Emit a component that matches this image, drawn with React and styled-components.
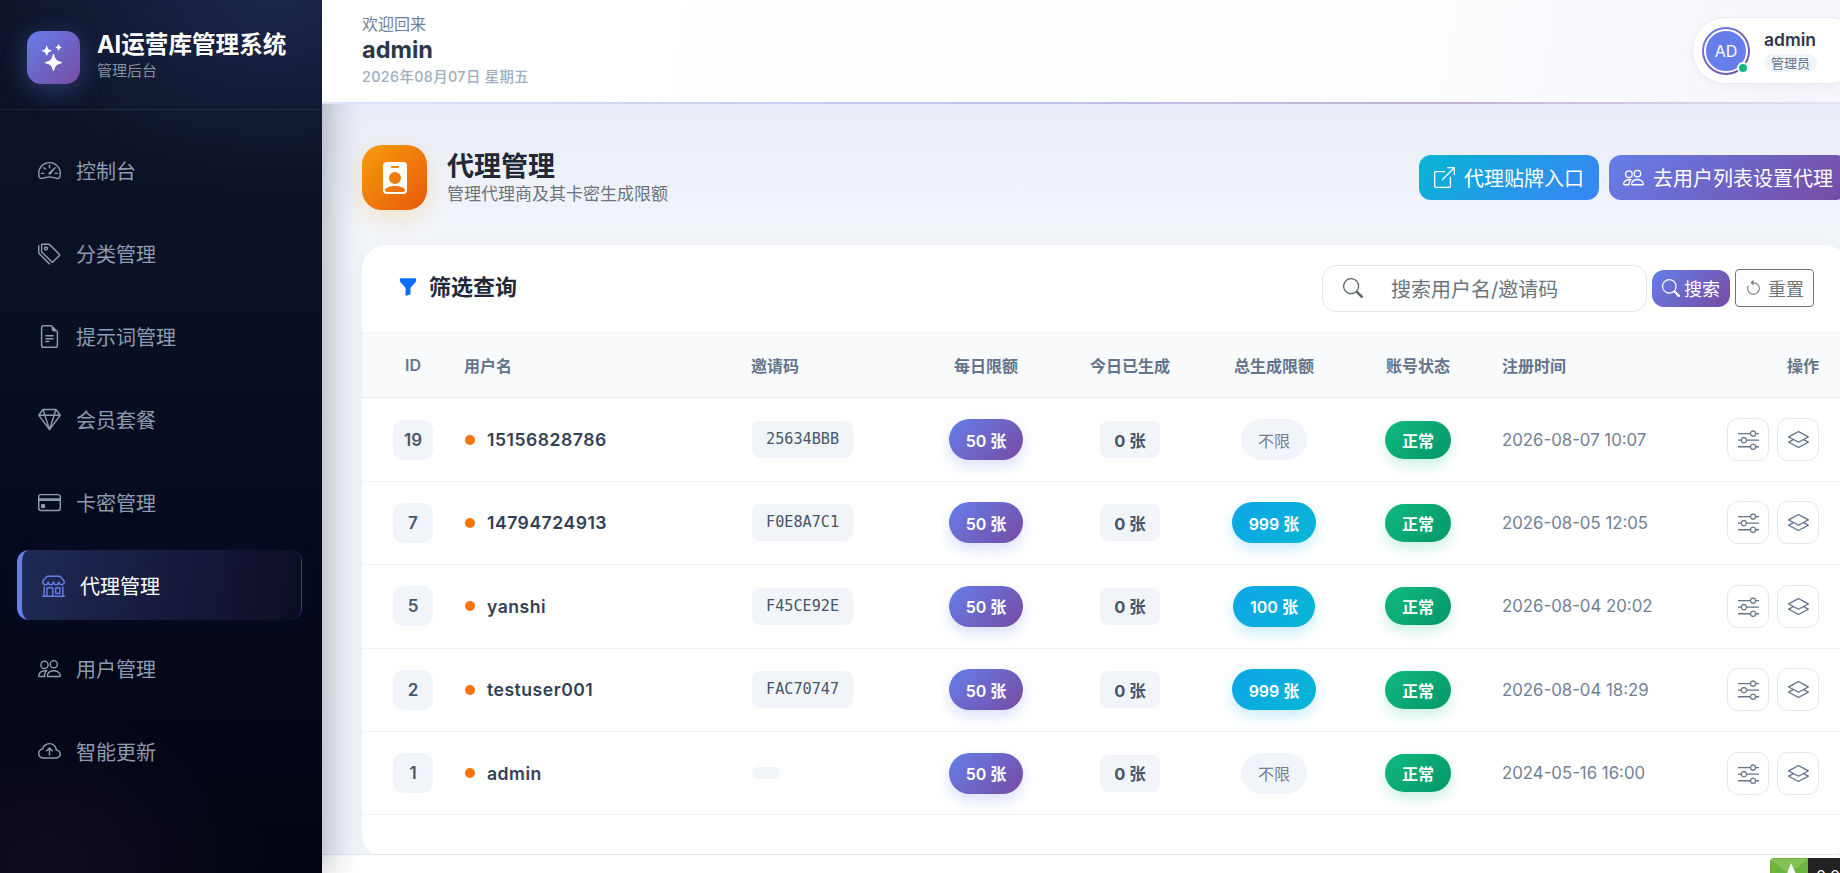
import React from "react"
import styled, { createGlobalStyle } from "styled-components"
import {
  BsSpeedometer2,
  BsTags,
  BsFileEarmarkText,
  BsGem,
  BsCreditCard,
  BsShop,
  BsPeople,
  BsCloudArrowUp,
  BsStars,
  BsPersonBadgeFill,
  BsBoxArrowUpRight,
  BsFunnelFill,
  BsSearch,
  BsArrowCounterclockwise,
  BsSliders,
  BsLayers,
} from "react-icons/bs"

const FONT = `Inter, "Noto Sans CJK SC", sans-serif`
const PURPLE = "linear-gradient(135deg, #667eea 0%, #764ba2 100%)"
const COLUMNS = "102px 287px 163px 144px 144px 144px 144px 170px 1fr"

const GlobalStyle = createGlobalStyle`
  html, body {
    margin: 0;
    height: 100%;
    overflow: hidden;
  }
  body {
    font-family: ${FONT};
    background: #f1f4f9;
  }
  * {
    box-sizing: border-box;
  }
`

const Layout = styled.div`
  display: flex;
  width: 1840px;
  height: 873px;
  overflow: hidden;
  position: relative;
`

const Sidebar = styled.aside`
  flex: 0 0 322px;
  height: 100%;
  position: relative;
  z-index: 2;
  color: #8d9bb0;
  background:
    radial-gradient(ellipse 300px 190px at 85% 0%, rgba(102, 126, 234, 0.17), transparent 100%),
    radial-gradient(ellipse 220px 160px at 15% 100%, rgba(118, 75, 162, 0.13), transparent 100%),
    linear-gradient(180deg, #0d1428 0%, #0a1124 35%, #050a1e 62%, #02040f 100%);
  box-shadow: 6px 0 32px rgba(15, 23, 42, 0.3);
`

const Brand = styled.div`
  height: 110px;
  display: flex;
  align-items: center;
  gap: 17px;
  padding: 5px 0 0 27px;
  border-bottom: 1px solid rgba(148, 163, 184, 0.12);
`

const BrandLogo = styled.div`
  width: 53px;
  height: 53px;
  border-radius: 14px;
  background: ${PURPLE};
  box-shadow: 0 6px 24px rgba(102, 126, 234, 0.35);
  color: #fff;
  display: flex;
  align-items: center;
  justify-content: center;
  font-size: 27px;
`

const BrandText = styled.div`
  display: flex;
  flex-direction: column;
  margin-top: -4px;
`

const BrandTitle = styled.div`
  color: #fff;
  font-size: 23.6px;
  line-height: 30px;
  font-weight: 700;
  white-space: nowrap;
`

const BrandSub = styled.div`
  font-size: 15px;
  line-height: 20px;
  margin-top: 1px;
  color: #8391a5;
`

const Nav = styled.nav`
  display: flex;
  flex-direction: column;
  padding: 25px 0 0 17px;
`

const NavItem = styled.a`
  height: 70px;
  margin-bottom: 13px;
  width: ${(p) => (p.$active ? "285px" : "281px")};
  display: flex;
  align-items: center;
  gap: 15px;
  font-size: 20px;
  border-radius: 12px;
  padding-left: ${(p) => (p.$active ? "20px" : "21px")};
  color: ${(p) => (p.$active ? "#fff" : "#8d9bb0")};
  border-left: ${(p) => (p.$active ? "5px solid #667eea" : "0")};
  border-right: ${(p) => (p.$active ? "1px solid rgba(102, 126, 234, 0.3)" : "0")};
  background: ${(p) =>
    p.$active ? "linear-gradient(90deg, rgba(102, 126, 234, 0.28), rgba(118, 75, 162, 0.08))" : "transparent"};
  box-shadow: ${(p) => (p.$active ? "0 0 20px rgba(102, 126, 234, 0.06)" : "none")};

  svg {
    font-size: 23px;
    flex: none;
    color: ${(p) => (p.$active ? "#667eea" : "#8d9bb0")};
  }
`

const Content = styled.div`
  flex: 1;
  min-width: 0;
  display: flex;
  flex-direction: column;
  height: 100%;
`

const TopBar = styled.header`
  height: 104px;
  flex: none;
  position: relative;
  z-index: 3;
  background: linear-gradient(100deg, #fff 0%, #fcfdfe 70%, #f4f6fc 100%);
  border-bottom: 2px solid;
  border-image: linear-gradient(90deg, #e0e5f8, #bdc7ef 40%, #c2b2da 75%, #e8e3f0) 1;
  display: flex;
  justify-content: space-between;
  align-items: flex-start;
  padding: 13px 0 0 40px;
`

const Welcome = styled.div`
  font-size: 16px;
  line-height: 22px;
  color: #718096;
`

const TopName = styled.div`
  font-size: 23.5px;
  line-height: 30px;
  font-weight: 700;
  color: #2d3748;
`

const TopDate = styled.div`
  font-size: 14.4px;
  line-height: 22px;
  margin-top: 1px;
  font-weight: 500;
  color: #a0aec0;
  letter-spacing: 0.35px;
`

const UserPill = styled.div`
  width: 171px;
  height: 67px;
  margin-top: 4px;
  margin-right: -23px;
  background: #fff;
  border: 1px solid #e8ecf4;
  border-radius: 34px;
  box-shadow: 0 3px 10px rgba(15, 23, 42, 0.04);
  display: flex;
  align-items: center;
  gap: 14px;
  padding-left: 9px;
`

const AvatarRing = styled.div`
  width: 48px;
  height: 48px;
  border-radius: 50%;
  background: ${PURPLE};
  padding: 2px;
  position: relative;
  flex: none;
`

const Avatar = styled.div`
  width: 100%;
  height: 100%;
  border-radius: 50%;
  background: #667eea;
  border: 2px solid #fff;
  color: #fff;
  font-size: 16px;
  display: flex;
  align-items: center;
  justify-content: center;
`

const OnlineDot = styled.span`
  position: absolute;
  right: 1px;
  bottom: 1px;
  width: 12px;
  height: 12px;
  border-radius: 50%;
  background: #10b981;
  border: 2px solid #fff;
`

const UserName = styled.div`
  font-size: 17.5px;
  line-height: 22px;
  font-weight: 600;
  color: #2d3748;
`

const RoleTag = styled.div`
  display: inline-block;
  font-size: 13px;
  line-height: 18px;
  padding: 0 7px;
  margin-top: 3px;
  border-radius: 9px;
  background: #f1f5f9;
  color: #64748b;
`

const Main = styled.main`
  flex: 1;
  min-height: 0;
  overflow: hidden;
  padding: 41px 0 0 40px;
  background: linear-gradient(180deg, #e9ecf6 0%, #f1f4f9 16%, #f1f4f9 100%);
`

const PageHead = styled.div`
  width: 1486px;
  height: 65px;
  display: flex;
  align-items: center;
  justify-content: space-between;
`

const HeadLeft = styled.div`
  display: flex;
  align-items: center;
  gap: 20px;
`

const HeadIcon = styled.div`
  width: 65px;
  height: 65px;
  border-radius: 20px;
  background: linear-gradient(135deg, #f59e0b 0%, #ea580c 100%);
  box-shadow: 0 8px 24px rgba(245, 158, 11, 0.2);
  color: #fff;
  display: flex;
  align-items: center;
  justify-content: center;
  font-size: 32px;
`

const PageTitle = styled.h1`
  margin: 0;
  font-size: 27px;
  line-height: 33px;
  font-weight: 700;
  color: #1f2937;
`

const PageSub = styled.div`
  font-size: 17px;
  line-height: 24px;
  color: #6b7280;
  margin-top: -1px;
`

const HeadActions = styled.div`
  display: flex;
  gap: 10px;
`

const HeadButton = styled.a`
  height: 45px;
  padding: 0 15px 0 ${(p) => (p.$cyan ? "15px" : "14px")};
  border-radius: 12px;
  display: flex;
  align-items: center;
  gap: 9px;
  font-size: 20px;
  color: #fff;
  white-space: nowrap;
  background: ${(p) => (p.$cyan ? "linear-gradient(135deg, #06b6d4 0%, #3b82f6 100%)" : PURPLE)};

  svg {
    font-size: 21px;
  }
`

const Card = styled.section`
  width: 1486px;
  height: 613px;
  margin-top: 35px;
  background: #fff;
  border-radius: 24px;
  box-shadow: 0 4px 20px rgba(15, 23, 42, 0.03);
`

const FilterBar = styled.div`
  height: 87px;
  display: flex;
  align-items: center;
  justify-content: space-between;
  padding: 0 34px 0 36px;
`

const FilterTitle = styled.div`
  display: flex;
  align-items: center;
  gap: 11px;
  font-size: 22px;
  line-height: 30px;
  font-weight: 700;
  color: #1f2937;
  margin-top: -3px;

  svg {
    color: #0d6efd;
    font-size: 20px;
  }
`

const FilterControls = styled.div`
  display: flex;
  align-items: center;
  gap: 5px;
`

const SearchBox = styled.div`
  width: 325px;
  height: 47px;
  margin-top: -1px;
  border: 1px solid #e2e5ea;
  border-radius: 14px;
  display: flex;
  align-items: center;
  gap: 28px;
  padding-left: 20px;
  font-size: 20px;
  color: #6c757d;

  svg {
    font-size: 20px;
    color: #5f666d;
  }
`

const SearchButton = styled.button`
  width: 78px;
  height: 37px;
  border: 0;
  border-radius: 12px;
  padding: 0;
  margin-top: -1px;
  background: ${PURPLE};
  color: #fff;
  font: 18px ${FONT};
  display: flex;
  align-items: center;
  justify-content: center;
  gap: 4px;

  svg {
    font-size: 18px;
  }
`

const ResetButton = styled.button`
  width: 79px;
  height: 38px;
  border: 1px solid #6c757d;
  border-radius: 4px;
  padding: 0;
  margin-top: -1px;
  background: #fff;
  color: #6c757d;
  font: 18px ${FONT};
  display: flex;
  align-items: center;
  justify-content: center;
  gap: 6px;

  svg {
    font-size: 17px;
  }
`

const HeadRow = styled.div`
  display: grid;
  grid-template-columns: ${COLUMNS};
  height: 66.4px;
  align-items: center;
  background: #f8fafc;
  border-top: 1px solid #eef1f6;
  border-bottom: 1px solid #e2e8f0;
`

const HeadCell = styled.div`
  font-size: 16px;
  font-weight: 600;
  color: #64748b;
  white-space: nowrap;
  margin-top: -1px;
  text-align: ${(p) => p.$align || "left"};
  padding-left: ${(p) => p.$pl || 0}px;
  padding-right: ${(p) => p.$pr || 0}px;
`

const Row = styled.div`
  display: grid;
  grid-template-columns: ${COLUMNS};
  height: 83.4px;
  align-items: center;
  border-bottom: 1px solid #eff2f6;
`

const Cell = styled.div`
  display: flex;
  align-items: center;
  justify-content: ${(p) => p.$justify || "center"};
  padding-left: ${(p) => p.$pl || 0}px;
  padding-right: ${(p) => p.$pr || 0}px;
  min-width: 0;
`

const IdBadge = styled.div`
  width: 40px;
  height: 40px;
  border-radius: 10px;
  background: #f1f5f9;
  color: #475569;
  font-size: 17px;
  font-weight: 600;
  display: flex;
  align-items: center;
  justify-content: center;
`

const OrangeDot = styled.span`
  width: 10px;
  height: 10px;
  border-radius: 50%;
  background: #f97306;
  margin-left: 1px;
  margin-right: 12px;
  flex: none;
`

const UserLabel = styled.span`
  font-size: 17.6px;
  font-weight: 600;
  letter-spacing: 0.5px;
  color: #334155;
`

const CodeChip = styled.div`
  margin-left: 1px;
  padding: 6px 14px;
  border-radius: 8px;
  background: #f1f5f9;
  color: #475569;
  font-family: "DejaVu Sans Mono", monospace;
  font-size: 15.2px;
  line-height: 25px;
`

const Pill = styled.div`
  height: ${(p) => (p.$short ? 38 : 41)}px;
  padding: 0 ${(p) => (p.$short ? 16.5 : 17)}px;
  border-radius: 21px;
  display: flex;
  align-items: center;
  font-size: 16px;
  font-weight: 600;
  white-space: nowrap;
  color: #fff;
  background: ${(p) => p.$bg};
  box-shadow: ${(p) => p.$shadow};
`

const CountChip = styled.div`
  height: 37px;
  padding: 0 14.5px;
  border-radius: 8px;
  background: #f1f5f9;
  color: #475569;
  font-size: 16.5px;
  font-weight: 700;
  display: flex;
  align-items: center;
`

const NoLimit = styled.div`
  height: 41px;
  width: 66px;
  border-radius: 21px;
  background: #f1f5f9;
  color: #718096;
  font-size: 16px;
  display: flex;
  align-items: center;
  justify-content: center;
`

const TimeText = styled.span`
  font-size: 16.8px;
  color: #718096;
  white-space: nowrap;
`

const ActionGroup = styled.div`
  display: flex;
  gap: 8px;
`

const IconButton = styled.button`
  width: 42px;
  height: 43px;
  border: 1px solid #e2e8f0;
  border-radius: 11px;
  padding: 0;
  background: #fff;
  color: #64748b;
  font-size: 21px;
  display: flex;
  align-items: center;
  justify-content: center;
`

const Footer = styled.footer`
  height: 19px;
  flex: none;
  background: #fff;
  border-top: 1px solid #e2e8f0;
  position: relative;
  z-index: 1;
`

const CornerWidget = styled.div`
  position: absolute;
  right: 0;
  bottom: 0;
  width: 70px;
  height: 15px;
  display: flex;
  overflow: hidden;
  border-top-left-radius: 4px;
  z-index: 4;
`

const CornerLogo = styled.div`
  width: 38px;
  background: #6db33f;
  flex: none;
`

const CornerValue = styled.div`
  flex: 1;
  background: #222;
  color: #fff;
  font-size: 16px;
  line-height: 16px;
  padding: 10px 0 0 8px;
  white-space: nowrap;
`

const navItems = [
  { label: "控制台", Icon: BsSpeedometer2 },
  { label: "分类管理", Icon: BsTags },
  { label: "提示词管理", Icon: BsFileEarmarkText },
  { label: "会员套餐", Icon: BsGem },
  { label: "卡密管理", Icon: BsCreditCard },
  { label: "代理管理", Icon: BsShop, active: true },
  { label: "用户管理", Icon: BsPeople },
  { label: "智能更新", Icon: BsCloudArrowUp },
]

const rows = [
  { id: 19, name: "15156828786", code: "25634BBB", total: null, time: "2026-08-07 10:07" },
  { id: 7, name: "14794724913", code: "F0E8A7C1", total: "999 张", time: "2026-08-05 12:05" },
  { id: 5, name: "yanshi", code: "F45CE92E", total: "100 张", time: "2026-08-04 20:02" },
  { id: 2, name: "testuser001", code: "FAC70747", total: "999 张", time: "2026-08-04 18:29" },
  { id: 1, name: "admin", code: "", total: null, time: "2024-05-16 16:00" },
]

function App() {
  return (
    <Layout>
      <GlobalStyle />
      <Sidebar>
        <Brand>
          <BrandLogo>
            <BsStars />
          </BrandLogo>
          <BrandText>
            <BrandTitle>AI运营库管理系统</BrandTitle>
            <BrandSub>管理后台</BrandSub>
          </BrandText>
        </Brand>
        <Nav>
          {navItems.map(({ label, Icon, active }) => (
            <NavItem key={label} $active={active}>
              <Icon />
              {label}
            </NavItem>
          ))}
        </Nav>
      </Sidebar>

      <Content>
        <TopBar>
          <div>
            <Welcome>欢迎回来</Welcome>
            <TopName>admin</TopName>
            <TopDate>2026年08月07日 星期五</TopDate>
          </div>
          <UserPill>
            <AvatarRing>
              <Avatar>AD</Avatar>
              <OnlineDot />
            </AvatarRing>
            <div>
              <UserName>admin</UserName>
              <RoleTag>管理员</RoleTag>
            </div>
          </UserPill>
        </TopBar>

        <Main>
          <PageHead>
            <HeadLeft>
              <HeadIcon>
                <BsPersonBadgeFill />
              </HeadIcon>
              <div>
                <PageTitle>代理管理</PageTitle>
                <PageSub>管理代理商及其卡密生成限额</PageSub>
              </div>
            </HeadLeft>
            <HeadActions>
              <HeadButton $cyan>
                <BsBoxArrowUpRight />
                代理贴牌入口
              </HeadButton>
              <HeadButton>
                <BsPeople />
                去用户列表设置代理
              </HeadButton>
            </HeadActions>
          </PageHead>

          <Card>
            <FilterBar>
              <FilterTitle>
                <BsFunnelFill />
                筛选查询
              </FilterTitle>
              <FilterControls>
                <SearchBox>
                  <BsSearch />
                  搜索用户名/邀请码
                </SearchBox>
                <SearchButton>
                  <BsSearch />
                  搜索
                </SearchButton>
                <ResetButton>
                  <BsArrowCounterclockwise />
                  重置
                </ResetButton>
              </FilterControls>
            </FilterBar>

            <HeadRow>
              <HeadCell $align="center">ID</HeadCell>
              <HeadCell>用户名</HeadCell>
              <HeadCell>邀请码</HeadCell>
              <HeadCell $align="center">每日限额</HeadCell>
              <HeadCell $align="center">今日已生成</HeadCell>
              <HeadCell $align="center">总生成限额</HeadCell>
              <HeadCell $align="center">账号状态</HeadCell>
              <HeadCell $pl={12}>注册时间</HeadCell>
              <HeadCell $align="right" $pr={29}>
                操作
              </HeadCell>
            </HeadRow>

            {rows.map((row) => (
              <Row key={row.id}>
                <Cell>
                  <IdBadge>{row.id}</IdBadge>
                </Cell>
                <Cell $justify="flex-start">
                  <OrangeDot />
                  <UserLabel>{row.name}</UserLabel>
                </Cell>
                <Cell $justify="flex-start">
                  <CodeChip>{row.code}</CodeChip>
                </Cell>
                <Cell>
                  <Pill $bg={PURPLE} $shadow="0 6px 14px rgba(102, 126, 234, 0.25)">
                    50 张
                  </Pill>
                </Cell>
                <Cell>
                  <CountChip>0 张</CountChip>
                </Cell>
                <Cell>
                  {row.total ? (
                    <Pill
                      $bg="linear-gradient(135deg, #0ea5e9 0%, #06b6d4 100%)"
                      $shadow="0 6px 14px rgba(14, 165, 233, 0.22)"
                    >
                      {row.total}
                    </Pill>
                  ) : (
                    <NoLimit>不限</NoLimit>
                  )}
                </Cell>
                <Cell>
                  <Pill
                    $short
                    $bg="linear-gradient(135deg, #10b981 0%, #059669 100%)"
                    $shadow="0 6px 14px rgba(16, 185, 129, 0.22)"
                  >
                    正常
                  </Pill>
                </Cell>
                <Cell $justify="flex-start" $pl={12}>
                  <TimeText>{row.time}</TimeText>
                </Cell>
                <Cell $justify="flex-end" $pr={29}>
                  <ActionGroup>
                    <IconButton>
                      <BsSliders />
                    </IconButton>
                    <IconButton>
                      <BsLayers />
                    </IconButton>
                  </ActionGroup>
                </Cell>
              </Row>
            ))}
          </Card>
        </Main>

        <Footer />
      </Content>

      <CornerWidget>
        <CornerLogo>
          <svg width="38" height="15" viewBox="0 0 38 15">
            <path d="M0 0 H38 L19 15 Z" fill="#84c255" />
            <path d="M17 15 L21 4 L26 15 Z" fill="#fff" />
          </svg>
        </CornerLogo>
        <CornerValue>0.0</CornerValue>
      </CornerWidget>
    </Layout>
  )
}

export default App
